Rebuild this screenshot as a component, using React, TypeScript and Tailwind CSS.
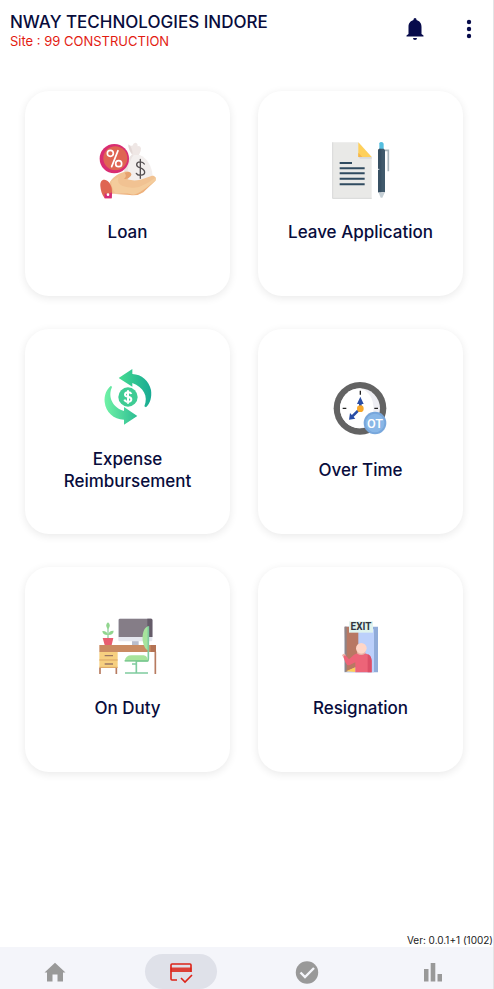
import type { ReactNode } from "react";

function LoanIcon() {
  return (
    <svg viewBox="33 36 174 174" className="size-[58px]" aria-hidden="true">
      <path d="M121 43Q128 49 133 47Q137 37 144 38Q150 40 149 49Q156 46 159 55Q160 62 153 75H132Q119 54 121 43Z" fill="#efe7e5" />
      <path d="M122 44Q132 50 134 72L130 69Q120 54 122 44Z" fill="#e3d8d6" />
      <path d="M131 75H155C177 84 192 108 194 139C188 163 128 172 108 151C103 120 113 87 131 75Z" fill="#f3efee" />
      <path d="M131 75C115 90 106 117 110 145L120 154C115 120 123 94 137 75Z" fill="#eae3e2" />
      <path d="M169 102C164 93 146 93 146 104C146 116 170 112 170 127C170 138 149 138 145 130M157 88V145" fill="none" stroke="#555052" strokeWidth="4" strokeLinecap="round" />
      <circle cx="79" cy="86" r="44" fill="#d92d72" />
      <circle cx="82" cy="85" r="36" fill="#df6553" />
      <circle cx="67" cy="70" r="9" fill="none" stroke="#fff" strokeWidth="5" />
      <circle cx="92" cy="101" r="9" fill="none" stroke="#fff" strokeWidth="5" />
      <path d="M90 62L71 110" stroke="#fff" strokeWidth="5" strokeLinecap="round" />
      <path d="M64 160C70 145 88 131 108 126C124 121 134 130 128 138L118 148C137 154 153 151 164 147L192 137C201 136 207 144 202 152L163 186Q148 199 126 193L96 190L72 191Z" fill="#f1c292" />
      <path d="M110 128C126 121 135 132 127 139Q119 150 108 146Q118 139 110 128Z" fill="#e6a26f" />
      <path d="M92 140Q84 161 107 169Q128 176 153 171Q180 160 202 143Q207 149 200 155L163 187Q150 197 130 193Q105 190 82 190Q70 175 70 154Z" fill="#f4cf9f" opacity=".75" />
      <path d="M64 160Q77 174 73 191Q110 187 138 194Q158 190 203 151L166 187Q148 199 126 195L72 191Z" fill="#eeb17c" />
      <path d="M37 168C36 156 41 148 50 149C62 150 74 168 72 189L71 205H50C41 193 38 180 37 168Z" fill="#df6652" />
      <path d="M50 190Q61 196 72 187L71 205H50Z" fill="#d52b79" />
      <circle cx="60" cy="194" r="4" fill="#fff" />
    </svg>
  );
}

function LeaveIcon() {
  return (
    <svg viewBox="36 36 174 174" className="size-[58px]" aria-hidden="true">
      <path d="M37 37H115L155 81V206H37Z" fill="#e9e9e7" />
      <path d="M38 37V205H155" fill="none" stroke="#d9dad9" strokeWidth="3" />
      <path d="M115 37L155 81H115Z" fill="#ffd05a" />
      <path d="M115 68L127 81H115Z" fill="#f4b44b" />
      <path d="M115 81H155V86H120Z" fill="#d9d9d9" />
      <path d="M59 99H96M59 115H134M59 130H134M59 146H134M59 163H134" stroke="#304b60" strokeWidth="6" />
      <path d="M178 40Q179 36 184 36Q190 36 191 41V58H178Z" fill="#54bedf" />
      <path d="M194 61H205V124" fill="none" stroke="#aab6bc" strokeWidth="5" />
      <path d="M174 60L178 56H191L195 60V187H174Z" fill="#40596b" />
      <path d="M174 108V187H184V57L178 56L174 60Z" fill="#385063" />
      <path d="M174 118H178" stroke="#dee5e8" strokeWidth="3" />
      <path d="M176 188H194L187 203H182Z" fill="#c5cfd5" />
    </svg>
  );
}

function ExpenseIcon() {
  return (
    <svg viewBox="33 28 174 174" className="size-[58px]" aria-hidden="true">
      <defs>
        <linearGradient id="expense-top" x1="0" x2="1">
          <stop stopColor="#46dc91" />
          <stop offset="1" stopColor="#18aa93" />
        </linearGradient>
        <linearGradient id="expense-bottom" x1="0" x2="1">
          <stop stopColor="#70f2a6" />
          <stop offset="1" stopColor="#2dbd93" />
        </linearGradient>
      </defs>
      <path d="M92 55L133 28V43C161 44 183 64 189 91C192 112 187 132 174 143L169 140C182 110 166 82 133 70V81Z" fill="url(#expense-top)" />
      <path d="M148 169L108 195V180C77 180 53 157 50 127C48 107 55 89 69 78L72 82C58 113 75 144 108 154V142Z" fill="url(#expense-bottom)" />
      <circle cx="120" cy="112" r="29" fill="#3fcc94" />
      <path d="M130 103C127 95 111 96 111 105C111 114 130 109 130 119C130 129 113 129 109 120M120 92V132" fill="none" stroke="#fff" strokeWidth="6" />
    </svg>
  );
}

function OvertimeIcon() {
  return (
    <svg viewBox="36 31 174 174" className="size-[58px]" aria-hidden="true">
      <circle cx="120" cy="116" r="79" fill="#636363" />
      <circle cx="120" cy="116" r="60" fill="#eeeef3" />
      <path d="M120 56A60 60 0 0 0 120 176C174 163 174 69 120 56Z" fill="#fff" />
      <path d="M121 63V75M68 116H79M163 116H174" stroke="#242424" strokeWidth="4" />
      <path d="M121 116V98M115 122L97 140" stroke="#294da5" strokeWidth="8" />
      <path d="M121 81L131 103H111ZM87 150L90 130L106 147Z" fill="#294da5" />
      <circle cx="121" cy="117" r="10" fill="#f7a729" />
      <circle cx="165" cy="160" r="34" fill="#78a7dc" />
      <circle cx="165" cy="160" r="28" fill="#89b7e7" />
      <text x="165" y="174" textAnchor="middle" fill="#fff" className="font-['Roboto'] text-[38px] font-medium">OT</text>
    </svg>
  );
}

function DutyIcon() {
  return (
    <svg viewBox="33 25 174 174" className="size-[58px]" aria-hidden="true">
      <path d="M132 92H152V106H132Z" fill="#b9bdcc" />
      <rect x="91" y="27" width="102" height="68" rx="4" fill="#e5e7ef" />
      <path d="M92 82V31Q92 27 96 27H189Q193 27 193 31V82Z" fill="#857d87" />
      <path d="M178 27H189Q193 27 193 31V82H178Z" fill="#655c69" />
      <path d="M60 86V42" stroke="#73bd81" strokeWidth="3" />
      <path d="M60 59Q49 47 60 38Q71 47 60 59M60 76Q44 77 43 64Q57 63 60 76M60 76Q63 62 77 63Q76 77 60 76" fill="#91d58e" />
      <path d="M44 85H76L71 106H50Z" fill="#e85e70" />
      <path d="M36 175V193M85 175V193M202 126V193" stroke="#b77b60" strokeWidth="5" />
      <path d="M34 106H204V127H34Z" fill="#c98b62" />
      <path d="M188 106H204V127H188Z" fill="#b47355" />
      <path d="M34 127H89V175H34Z" fill="#f7d080" />
      <path d="M34 151H89M34 173H89" stroke="#d9a364" strokeWidth="3" />
      <path d="M50 138H75M50 163H75" stroke="#9b7765" strokeWidth="4" />
      <path d="M181 50C166 53 161 79 165 98Q169 119 181 122Z" fill="#a7e49c" />
      <path d="M181 50V147Q181 154 173 154H145V190M111 190H180M132 163H145" fill="none" stroke="#7fcb9f" strokeWidth="5" />
      <path d="M110 154Q113 137 130 137H167Q178 138 180 154Z" fill="#a7e49c" />
      <path d="M110 151H181V156H110Z" fill="#7fcb91" />
    </svg>
  );
}

function ResignationIcon() {
  return (
    <svg viewBox="36 25 174 174" className="size-[58px]" aria-hidden="true">
      <path d="M74 51H174V188H74Z" fill="#91acd9" />
      <path d="M82 59H162V188H82Z" fill="#bcd0fb" />
      <path d="M74 51H115V169L77 187Z" fill="#b87863" />
      <path d="M74 51H80V185L74 188Z" fill="#8f8587" />
      <path d="M78 185L106 173V187Z" fill="#ffcd58" />
      <circle cx="72" cy="137" r="5" fill="#efb4a8" />
      <path d="M70 142Q73 134 78 138L87 149L101 136Q108 130 124 130Q155 130 155 153V188H106V158L88 167Q80 168 76 158Z" fill="#ed6478" />
      <path d="M143 133Q155 139 155 154V188H143Z" fill="#dc4f67" />
      <path d="M110 122Q124 139 137 122L135 132Q124 140 112 132Z" fill="#e8b2a5" />
      <circle cx="124" cy="116" r="16" fill="#ffd6c7" />
      <path d="M87 35H159V69H87Z" fill="#e0f3ee" />
      <text x="123" y="62" textAnchor="middle" fill="#303640" className="font-['Roboto'] text-[30px] font-bold">EXIT</text>
    </svg>
  );
}

const tiles: { label: string; icon: ReactNode }[] = [
  { label: "Loan", icon: <LoanIcon /> },
  { label: "Leave Application", icon: <LeaveIcon /> },
  { label: "Expense Reimbursement", icon: <ExpenseIcon /> },
  { label: "Over Time", icon: <OvertimeIcon /> },
  { label: "On Duty", icon: <DutyIcon /> },
  { label: "Resignation", icon: <ResignationIcon /> },
];

const tabs: { label: string; active?: boolean; icon: ReactNode }[] = [
  { label: "Home", icon: <path d="M9.500 21.500V14.500H14.500V21.500H20V12.500H22.500L12 2.800 1.500 12.500H4V21.500Z" /> },
  {
    label: "Requests",
    active: true,
    icon: (
      <>
        <path d="M8 20H3Q2 20 2 19V5Q2 4 3 4H21Q22 4 22 5V12" fill="none" stroke="currentColor" strokeWidth="1.600" />
        <path d="M1.500 7.500H22.500V12H1.500Z" opacity=".85" />
        <path d="M12 18L16 22L23 15" fill="none" stroke="currentColor" strokeWidth="1.600" />
      </>
    ),
  },
  {
    label: "Approvals",
    icon: (
      <>
        <circle cx="12" cy="12.500" r="11.200" />
        <path d="M5.500 12.500L10 17L19 8" fill="none" stroke="#f4f5fa" strokeWidth="2.400" />
      </>
    ),
  },
  { label: "Reports", icon: <path d="M3 9h4.500v12.500H3zM9.700 3h4.600v18.500H9.700zM16.500 14H21v7.500h-4.500z" /> },
];

export default function App() {
  return (
    <div className="flex min-h-screen flex-col border-r border-[#e4e4e6] bg-white font-['Inter',sans-serif] text-[#080c3c]">
      <header className="flex items-start justify-between pt-[11px] pr-3 pl-2.5">
        <div>
          <h1 className="text-[17px] leading-[22px] font-medium">NWAY TECHNOLOGIES INDORE</h1>
          <p className="text-[13px] leading-4 text-[#e31b12]">Site : 99 CONSTRUCTION</p>
        </div>
        <div className="flex gap-[30px] pt-1.5">
          <button type="button" aria-label="Notifications">
            <svg viewBox="0 0 24 24" className="size-6" fill="#070b4b" aria-hidden="true">
              <path d="M3.500 19.500V18.500L5.500 17V10C5.500 6 7.500 4 10.500 3V2.500Q10.500 1 12 1T13.500 2.500V3C16.500 4 18.500 6 18.500 10V17L20.500 18.500V19.500ZM10 21H14Q14 23 12 23T10 21Z" />
            </svg>
          </button>
          <button type="button" aria-label="More options">
            <svg viewBox="0 0 24 24" className="size-6" fill="#070b4b" aria-hidden="true">
              <circle cx="12" cy="5" r="2.200" />
              <circle cx="12" cy="12" r="2.200" />
              <circle cx="12" cy="19" r="2.200" />
            </svg>
          </button>
        </div>
      </header>

      <main className="grid grid-cols-2 gap-x-7 gap-y-[33px] pt-[42px] pr-[30px] pl-[25px]">
        {tiles.map((tile) => (
          <button
            key={tile.label}
            type="button"
            className="flex aspect-square flex-col items-center justify-center gap-[21px] rounded-3xl bg-white px-6 pb-[3px] shadow-[0_2px_8px_rgba(0,0,0,0.09)]"
          >
            {tile.icon}
            <span className="text-[17px] leading-[22px] font-medium">{tile.label}</span>
          </button>
        ))}
      </main>

      <p className="mt-auto text-right text-[10px] leading-[14px] text-[#222222]">Ver: 0.0.1+1 (1002)</p>
      <nav className="flex justify-between bg-[#f4f5fa] pt-[7px] pr-6 pl-[19px]" aria-label="Main">
        {tabs.map((tab) => (
          <button
            key={tab.label}
            type="button"
            aria-label={tab.label}
            className={
              tab.active
                ? "flex h-[35px] w-[72px] items-center justify-center rounded-full bg-[#dfe1e9] text-[#dc2318]"
                : "flex h-[35px] w-[72px] items-center justify-center text-[#999999]"
            }
          >
            <svg viewBox="0 0 24 24" className="size-6" fill="currentColor" aria-hidden="true">
              {tab.icon}
            </svg>
          </button>
        ))}
      </nav>
    </div>
  );
}
